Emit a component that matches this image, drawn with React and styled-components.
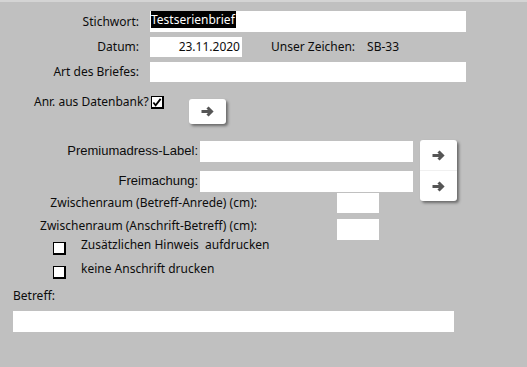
import styled, { createGlobalStyle } from 'styled-components';

const GlobalStyle = createGlobalStyle`
  html, body {
    margin: 0;
    padding: 0;
    background: #c0c0c0;
  }
`;

const Form = styled.div`
  width: 527px;
  height: 367px;
  box-sizing: border-box;
  background: #c0c0c0;
  border-top: 2px solid #d4d4d4;
  padding-top: 9px;
  font-family: "Noto Sans", "Open Sans", sans-serif;
  font-size: 12px;
  line-height: 16px;
  color: #0c0c0c;
  overflow: hidden;
`;

const Row = styled.div`
  display: flex;
  align-items: ${(p) => p.$align || 'center'};
  margin-top: ${(p) => p.$top || 0}px;
  padding-left: ${(p) => p.$left || 0}px;
`;

const Label = styled.div`
  width: ${(p) => p.$width}px;
  text-align: right;
  margin-right: ${(p) => p.$gap ?? 11}px;
  white-space: nowrap;
  font-family: ${(p) => (p.$arial ? '"Liberation Sans", Arial, sans-serif' : 'inherit')};
  font-size: ${(p) => (p.$arial ? 13 : 12)}px;
  position: relative;
  top: ${(p) => p.$shift || 0}px;
`;

const Text = styled.span`
  white-space: nowrap;
  margin-left: ${(p) => p.$left || 0}px;
  margin-top: ${(p) => p.$top || 0}px;
`;

const Field = styled.div`
  width: ${(p) => p.$width}px;
  height: ${(p) => p.$height || 21}px;
  background: #fff;
  box-sizing: border-box;
  display: flex;
  align-items: center;
  justify-content: ${(p) => (p.$right ? 'flex-end' : 'flex-start')};
  padding: 0 ${(p) => (p.$right ? 2 : 1)}px;
  white-space: nowrap;
`;

const Selected = styled.span`
  background: #000;
  color: #fff;
  align-self: flex-start;
  height: 17px;
  line-height: 17px;
  padding-right: 1px;
`;

const Box = styled.div`
  width: 13px;
  height: 13px;
  flex: none;
  box-sizing: border-box;
  background: #fff;
  border: 2px solid #000;
  border-top-width: 1px;
  border-left-width: 1px;
  display: flex;
  align-items: center;
  justify-content: center;
  margin-left: ${(p) => p.$left || 0}px;
  margin-top: ${(p) => p.$top || 0}px;
`;

const Button = styled.div`
  width: 37px;
  height: ${(p) => p.$height || 25}px;
  background: #fff;
  border-radius: 3px;
  box-shadow: 2px 2px 3px rgba(0, 0, 0, 0.45);
  display: flex;
  flex-direction: column;
  margin-left: ${(p) => p.$left || 0}px;
  margin-top: ${(p) => p.$top || 0}px;
`;

const Cell = styled.div`
  flex: 1;
  display: flex;
  align-items: center;
  justify-content: center;
  & + & {
    border-top: 1px solid #f0f0f0;
  }
`;

const Stack = styled.div`
  display: flex;
  flex-direction: column;
  gap: ${(p) => p.$gap || 0}px;
`;

const Arrow = () => (
  <svg width="13" height="11" viewBox="0 0 13 11">
    <path
      d="M0.5 5.5 H10.5 M6.5 1.5 L10.5 5.5 L6.5 9.5"
      fill="none"
      stroke="#555"
      strokeWidth="3"
      strokeLinejoin="miter"
    />
  </svg>
);

export default function App() {
  return (
    <>
      <GlobalStyle />
      <Form>
        <Row>
          <Label $width={139}>Stichwort:</Label>
          <Field $width={316}>
            <Selected>Testserienbrief</Selected>
          </Field>
        </Row>
        <Row $top={5}>
          <Label $width={139}>Datum:</Label>
          <Field $width={92} $height={20} $right>23.11.2020</Field>
          <Text $left={29}>Unser Zeichen:</Text>
          <Text $left={12}>SB-33</Text>
        </Row>
        <Row $top={5}>
          <Label $width={139}>Art des Briefes:</Label>
          <Field $width={316} $height={20} />
        </Row>
        <Row $top={11} $left={34} $align="flex-start">
          <Text $top={1}>Anr. aus Datenbank?</Text>
          <Box $left={2} $top={3}>
            <svg width="11" height="11" viewBox="0 0 11 11">
              <path d="M1.5 5.5 L4 8.5 L9.5 1.5" fill="none" stroke="#000" strokeWidth="2" />
            </svg>
          </Box>
          <Button $left={25} $top={6}>
            <Cell>
              <Arrow />
            </Cell>
          </Button>
        </Row>
        <Row $top={17} $align="flex-start">
          <Stack $gap={9}>
            <Row>
              <Label $width={198} $gap={2} $arial $shift={-1}>Premiumadress-Label:</Label>
              <Field $width={213} />
            </Row>
            <Row>
              <Label $width={198} $gap={2} $arial $shift={-1}>Freimachung:</Label>
              <Field $width={213} />
            </Row>
          </Stack>
          <Button $left={7} $top={-1} $height={61}>
            <Cell>
              <Arrow />
            </Cell>
            <Cell>
              <Arrow />
            </Cell>
          </Button>
        </Row>
        <Row $top={-8}>
          <Label $width={257} $gap={80} $shift={0}>Zwischenraum (Betreff-Anrede) (cm):</Label>
          <Field $width={42} $height={20} />
        </Row>
        <Row $top={6}>
          <Label $width={257} $gap={80} $shift={-4}>Zwischenraum (Anschrift-Betreff) (cm):</Label>
          <Field $width={42} />
        </Row>
        <Row $top={-3} $left={53} $align="flex-start">
          <Box $top={5} />
          <Text $left={15}>Zusätzlichen Hinweis&nbsp; aufdrucken</Text>
        </Row>
        <Row $top={6} $left={53} $align="flex-start">
          <Box $top={5} />
          <Text $left={15}>keine Anschrift drucken</Text>
        </Row>
        <Row $top={9} $left={13}>
          <Text>Betreff:</Text>
        </Row>
        <Row $top={7} $left={13}>
          <Field $width={441} />
        </Row>
      </Form>
    </>
  );
}
